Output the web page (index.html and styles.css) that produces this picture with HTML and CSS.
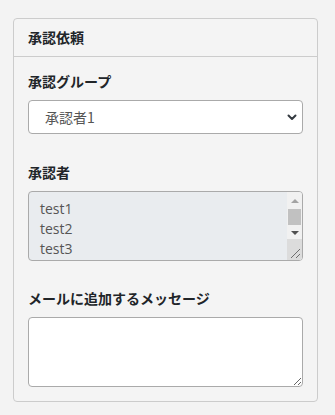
FILE: index.html
```html
<!DOCTYPE html>
<html lang="ja">
<head>
  <meta charset="UTF-8" />
  <meta name="viewport" content="width=device-width, initial-scale=1.0" />
  <title>承認依頼</title>
  <link rel="stylesheet" href="styles.css">
</head>
<body>
  <div class="card">
    <div class="card-header">承認依頼</div>

    <div class="card-body">
      <div class="form-group">
        <label for="group">承認グループ</label>
        <div class="select-wrap">
          <select id="group" class="form-select">
            <option>承認者1</option>
            <option>承認者2</option>
          </select>
          <svg class="select-arrow" width="10" height="7" viewBox="0 0 10 7">
            <path d="M1.5 1.5 L5 5 L8.5 1.5" fill="none" stroke="#343a40" stroke-width="2" stroke-linecap="round" stroke-linejoin="round"/>
          </svg>
        </div>
      </div>

      <div class="form-group approvers">
        <label>承認者</label>
        <!-- disabled multi select, drawn by hand so the scrollbar shows -->
        <div class="listbox" role="listbox" aria-disabled="true">
          <ul class="listbox-items">
            <li>test1</li>
            <li>test2</li>
            <li>test3</li>
          </ul>
          <div class="listbox-scroll">
            <div class="scroll-btn up"><span></span></div>
            <div class="scroll-thumb"></div>
            <div class="scroll-btn down"><span></span></div>
            <div class="scroll-resizer">
              <svg width="15" height="21" viewBox="0 0 15 21">
                <path d="M4 19 L13 10 M9 19 L13 15" stroke="#6e6e6e" stroke-width="1" fill="none"/>
              </svg>
            </div>
          </div>
        </div>
      </div>

      <div class="form-group last">
        <label for="message">メールに追加するメッセージ</label>
        <textarea id="message" class="form-textarea"></textarea>
      </div>
    </div>
  </div>
</body>
</html>
```

FILE: styles.css
```css
body {
  margin: 0;
  padding: 18px 17px 0 13px;
  background-color: #f3f3f3;
  font-family: "Noto Sans CJK JP", "Noto Sans", sans-serif;
  color: #212529;
  font-size: 14px;
}

.card {
  background-color: #f4f4f4;
  border: 1px solid #cccccc;
  border-radius: 4px;
}

.card-header {
  height: 37px;
  line-height: 37px;
  padding: 0 14px;
  font-weight: 700;
  font-size: 14px;
  border-bottom: 1px solid #cccccc;
}

.card-body {
  padding: 14px;
}

.form-group {
  margin-bottom: 28px;
}

.form-group.approvers {
  margin-bottom: 27px;
}

.form-group.last {
  margin-bottom: 0;
}

.form-group label {
  display: block;
  height: 20px;
  line-height: 20px;
  font-weight: 700;
  font-size: 14px;
  margin-bottom: 9px;
}

.select-wrap {
  position: relative;
}

.form-select {
  -webkit-appearance: none;
  appearance: none;
  display: block;
  width: 100%;
  height: 34px;
  box-sizing: border-box;
  padding: 0 30px 0 16px;
  border: 1px solid #aaaaaa;
  border-radius: 4px;
  background-color: #ffffff;
  color: #555555;
  font-family: "Noto Sans CJK JP", "Noto Sans", sans-serif;
  font-size: 14px;
}

.select-arrow {
  position: absolute;
  right: 6px;
  top: 14px;
}

/* Listbox */
.listbox {
  display: flex;
  height: 70px;
  box-sizing: border-box;
  border: 1px solid #aaaaaa;
  border-radius: 4px;
  background-color: #e9ecef;
  overflow: hidden;
}

.listbox-items {
  flex: 1;
  list-style: none;
  margin: 0;
  padding: 7px 0 0 11px;
  font-family: "Open Sans", "Noto Sans", sans-serif;
  font-size: 14px;
  color: #555555;
}

.listbox-items li {
  height: 20px;
  line-height: 20px;
}

.listbox-scroll {
  width: 15px;
  display: flex;
  flex-direction: column;
  background-color: #f1f1f1;
}

.scroll-btn {
  display: flex;
  justify-content: center;
  align-items: flex-start;
}

.scroll-btn.up {
  height: 15px;
}

.scroll-btn.up span {
  margin-top: 7px;
  border-left: 4px solid transparent;
  border-right: 4px solid transparent;
  border-bottom: 4px solid #a3a3a3;
}

.scroll-btn.down {
  height: 14px;
}

.scroll-btn.down span {
  margin-top: 6px;
  border-left: 4px solid transparent;
  border-right: 4px solid transparent;
  border-top: 4px solid #505050;
}

.scroll-thumb {
  height: 16px;
  margin: 2px 1px 0 1px;
  background-color: #c1c1c1;
}

.scroll-resizer {
  flex: 1;
  background-color: #dcdcdc;
}

.scroll-resizer svg {
  display: block;
}

.form-textarea {
  display: block;
  width: 100%;
  height: 70px;
  box-sizing: border-box;
  border: 1px solid #aaaaaa;
  border-radius: 4px;
  background-color: #ffffff;
  font-family: "Noto Sans CJK JP", "Noto Sans", sans-serif;
  font-size: 14px;
  resize: vertical;
}
```
